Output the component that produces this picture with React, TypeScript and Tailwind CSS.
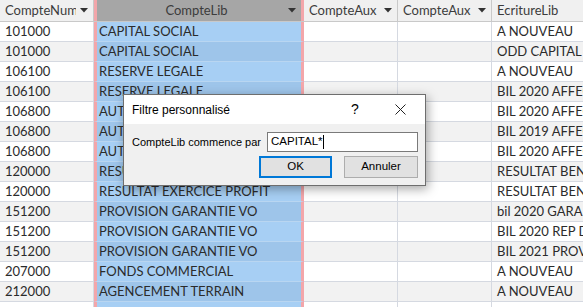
import React from "react";

const rows = [
  ["101000", "CAPITAL SOCIAL", "A NOUVEAU"],
  ["101000", "CAPITAL SOCIAL", "ODD CAPITAL AUGMENTATION"],
  ["106100", "RESERVE LEGALE", "A NOUVEAU"],
  ["106100", "RESERVE LEGALE", "BIL 2020 AFFECTATION"],
  ["106800", "AUTRES RESERVES", "BIL 2020 AFFECTATION"],
  ["106800", "AUTRES RESERVES", "BIL 2019 AFFECTATION"],
  ["106800", "AUTRES RESERVES", "BIL 2020 AFFECTATION"],
  ["120000", "RESULTAT EXERCICE PROFIT", "RESULTAT BENEFICE"],
  ["120000", "RESULTAT EXERCICE PROFIT", "RESULTAT BENEFICE"],
  ["151200", "PROVISION GARANTIE VO", "bil 2020 GARANTIE"],
  ["151200", "PROVISION GARANTIE VO", "BIL 2020 REP DOTATION"],
  ["151200", "PROVISION GARANTIE VO", "BIL 2021 PROVISION"],
  ["207000", "FONDS COMMERCIAL", "A NOUVEAU"],
  ["212000", "AGENCEMENT TERRAIN", "A NOUVEAU"],
  ["", "", ""],
];

function Arrow() {
  return (
    <svg width="8" height="5" viewBox="0 0 8 5" className="shrink-0">
      <polygon points="0,0 8,0 4,4.5" fill="#333" />
    </svg>
  );
}

function HeadCell({ label, w }: { label: string; w: string }) {
  return (
    <div className={`${w} shrink-0 h-full flex items-center gap-[4px] pl-[5px] pr-[5px] border-r border-[#c9c9c9] bg-[#f0f0f0] overflow-hidden`}>
      <span className="whitespace-nowrap overflow-hidden flex-1 min-w-0">{label}</span>
      <Arrow />
    </div>
  );
}

export default function App() {
  return (
    <div
      className="relative w-[583px] h-[307px] overflow-hidden bg-white text-[13px] text-[#2b2b2b]"
      style={{ fontFamily: "Lato, 'Liberation Sans', sans-serif" }}
    >
      {/* header */}
      <div className="flex h-[22px] border-b border-[#c9c9c9] text-[#3c3c3c]">
        <HeadCell label="CompteNum" w="w-[94px]" />
        <div className="w-[210px] shrink-0 h-full flex items-center bg-[#a6a6a6] border-x-[3px] border-[#f3a6aa] pr-[5px]">
          <span className="flex-1 text-center pl-[8px]">CompteLib</span>
          <Arrow />
        </div>
        <HeadCell label="CompteAux" w="w-[94px]" />
        <HeadCell label="CompteAux" w="w-[94px]" />
        <HeadCell label="EcritureLib" w="w-[120px]" />
      </div>

      {/* rows */}
      {rows.map((r, i) => {
        const alt = i % 2 === 1;
        const bg = alt ? "bg-[#f2f2f2]" : "bg-white";
        return (
          <div key={i} className="flex h-[20px]">
            <div className={`w-[94px] shrink-0 flex items-center pl-[5px] border-b border-r border-[#d5d9e1] ${bg}`}>
              {r[0]}
            </div>
            <div
              className={`w-[210px] shrink-0 flex items-center pl-[2px] border-x-[3px] border-x-[#f3a6aa] border-b border-b-[#b9d6f1] whitespace-nowrap overflow-hidden ${
                alt ? "bg-[#9ec5ea]" : "bg-[#a7cff4]"
              }`}
            >
              {r[1]}
            </div>
            <div className={`w-[94px] shrink-0 border-b border-r border-[#d5d9e1] ${bg}`} />
            <div className={`w-[94px] shrink-0 border-b border-r border-[#d5d9e1] ${bg}`} />
            <div className={`w-[120px] shrink-0 flex items-center pl-[5px] border-b border-[#d5d9e1] whitespace-nowrap overflow-hidden ${bg}`}>
              {r[2]}
            </div>
          </div>
        );
      })}

      {/* dialog */}
      <div
        className="absolute left-[123px] top-[94px] w-[303px] h-[92px] border border-[#6e6e6e] bg-[#f0f0f0] shadow-[2px_3px_10px_rgba(0,0,0,0.35)] text-[11px] text-black flex flex-col"
        style={{ fontFamily: "'Liberation Sans', Arial, sans-serif" }}
      >
        <div className="h-[29px] bg-white flex items-center pl-[8px] text-[12px]">
          <span className="flex-1">Filtre personnalisé</span>
          <span className="w-[12px] text-[14px] mr-[34px] text-center">?</span>
          <svg width="11" height="11" viewBox="0 0 11 11" className="mr-[19px]">
            <path d="M0.5 0.5 L10.5 10.5 M10.5 0.5 L0.5 10.5" stroke="#222" strokeWidth="1" />
          </svg>
        </div>
        <div className="flex items-center mt-[8px] pl-[8px] pr-[7px]">
          <span className="flex-1 min-w-0 whitespace-nowrap">CompteLib commence par</span>
          <div className="w-[151px] h-[20px] shrink-0 bg-white border border-[#7a7a7a] flex items-center pl-[3px] text-[11.5px]">
            <span>CAPITAL*</span>
            <span className="w-px h-[14px] bg-black" />
          </div>
        </div>
        <div className="flex justify-end gap-[12px] mt-[4px] pr-[7px] text-[11.5px]">
          <button className="w-[73px] h-[22px] bg-[#e1e1e1] border-2 border-[#0078d7]">OK</button>
          <button className="w-[74px] h-[22px] bg-[#e1e1e1] border border-[#adadad]">Annuler</button>
        </div>
      </div>
    </div>
  );
}
